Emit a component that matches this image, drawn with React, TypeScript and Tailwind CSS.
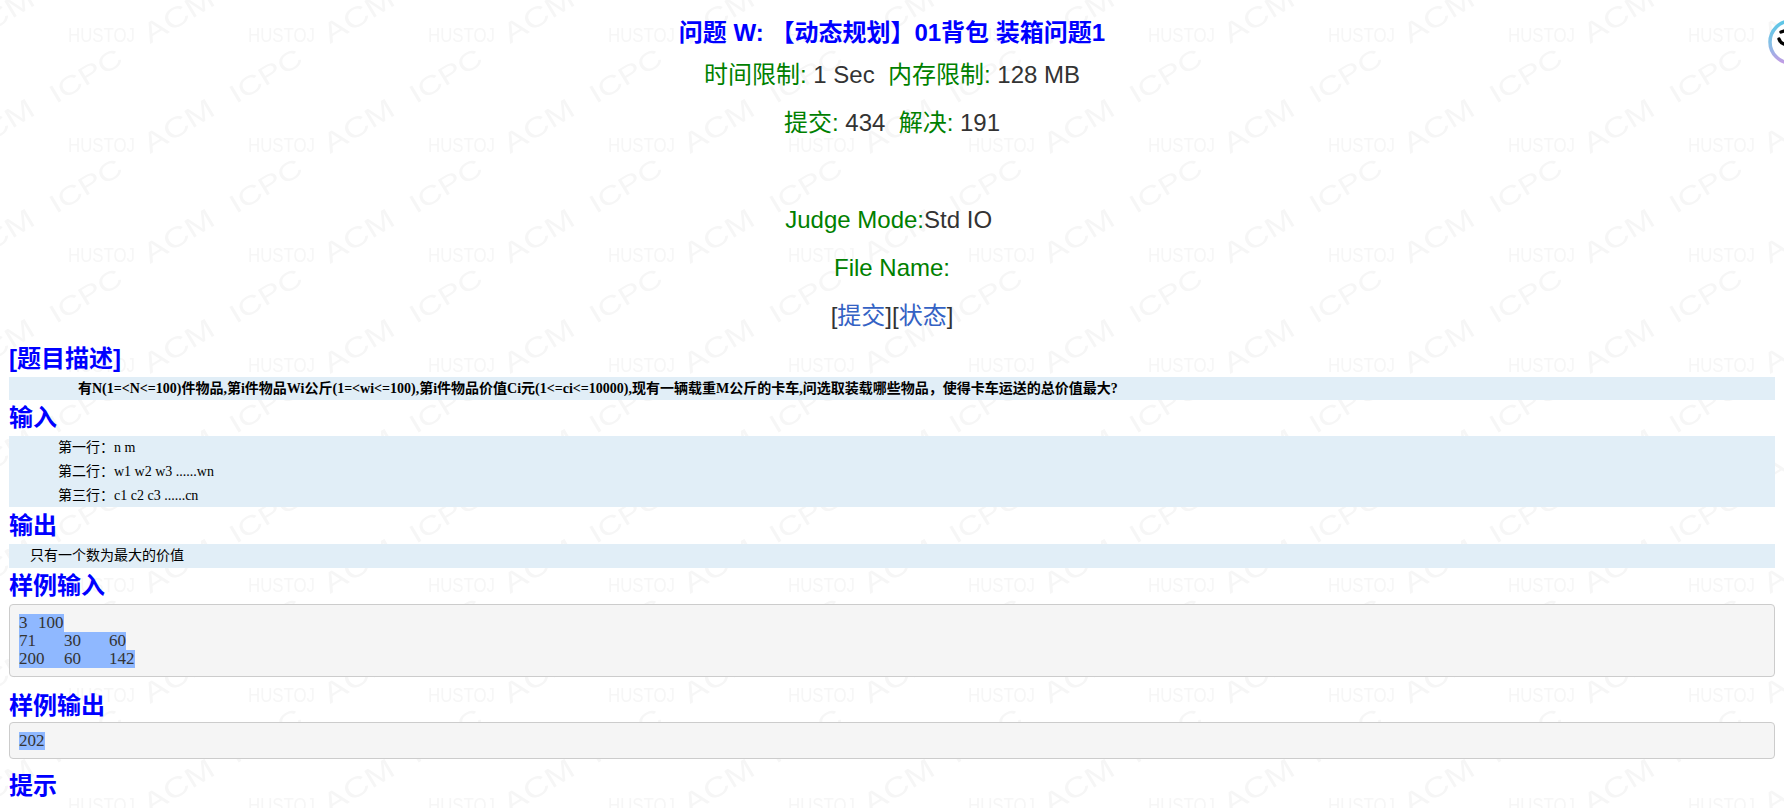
import React from 'react';

const BODY_FONT = 'font-["Liberation_Sans","Noto_Sans_CJK_SC",sans-serif]';

// repeating HUSTOJ / ACM / ICPC background, tile is 180x110
const Watermark: React.FC = () => {
  const acmOffsets = [
    [0, 0],
    [0, 110],
    [-180, 0],
    [-180, 110],
  ];
  return (
    <svg className="absolute inset-0 -z-10 h-full w-full" aria-hidden="true">
      <defs>
        <pattern id="hustoj-mark" x="0" y="0" width="180" height="110" patternUnits="userSpaceOnUse">
          <g fill="#f6f6f6" fontFamily="'Liberation Sans', sans-serif">
            <text x="68" y="42" fontSize="20" textLength="67" lengthAdjust="spacingAndGlyphs">
              HUSTOJ
            </text>
            {acmOffsets.map(([dx, dy]) => (
              <text
                key={`${dx}-${dy}`}
                transform={`translate(${150 + dx} ${44 + dy}) rotate(-31)`}
                fontSize="28"
                textLength="78"
                lengthAdjust="spacingAndGlyphs"
              >
                ACM
              </text>
            ))}
            <text
              transform="translate(56 104) rotate(-31)"
              fontSize="26"
              textLength="80"
              lengthAdjust="spacingAndGlyphs"
            >
              ICPC
            </text>
          </g>
        </pattern>
      </defs>
      <rect width="100%" height="100%" fill="url(#hustoj-mark)" />
    </svg>
  );
};

// round assistant badge, cut off by the right edge of the window
const CornerBadge: React.FC = () => (
  <svg className="absolute right-0 top-[19px]" width="16" height="46" viewBox="0 0 16 46" aria-hidden="true">
    <defs>
      <linearGradient id="badge-ring" x1="0" y1="0" x2="0" y2="1">
        <stop offset="0" stopColor="#5cc6e6" />
        <stop offset="0.55" stopColor="#86bfe6" />
        <stop offset="1" stopColor="#c29be4" />
      </linearGradient>
    </defs>
    <circle cx="23" cy="23" r="21" fill="#fff" stroke="url(#badge-ring)" strokeWidth="3.5" />
    <path d="M13 13 l3 -1 M11 20 c1 3 3 4.500 5 5" fill="none" stroke="#000" strokeWidth="3.4" strokeLinecap="round" />
  </svg>
);

const Heading: React.FC<{ children: React.ReactNode; className?: string }> = ({ children, className = '' }) => (
  <h2 className={`flex items-center text-[24px] font-bold leading-none text-[#0000ff] ${className}`}>{children}</h2>
);

const Label: React.FC<{ children: React.ReactNode }> = ({ children }) => (
  <span className="text-[#008000]">{children}</span>
);

const Picked: React.FC<{ children: React.ReactNode }> = ({ children }) => (
  <span className="inline-block h-[18px] bg-[#8fb8ff] align-top leading-[18px]">{children}</span>
);

const App: React.FC = () => {
  return (
    <div className={`relative isolate h-[808px] overflow-hidden px-[9px] text-[#333333] ${BODY_FONT}`}>
      <Watermark />
      <CornerBadge />

      <div className="text-center text-[24px] leading-[48px]">
        <h1 className="pt-[14px] text-[24px] font-bold leading-[37px] text-[#0000ff]">
          问题 W: 【动态规划】01背包 装箱问题1
        </h1>
        <p>
          <Label>时间限制:</Label> 1 Sec&nbsp;&nbsp;<Label>内存限制:</Label> 128 MB
        </p>
        <p>
          <Label>提交:</Label> 434&nbsp;&nbsp;<Label>解决:</Label> 191
        </p>
        <div className="h-[49px]" />
        <p>
          <Label>Judge Mode:</Label>Std IO&nbsp;
        </p>
        <p>
          <Label>File Name:</Label>
        </p>
        <p>
          [<span className="text-[#3462c4]">提交</span>][<span className="text-[#3462c4]">状态</span>]
        </p>
      </div>

      <Heading className="h-[37px]">[题目描述]</Heading>
      <div className='h-[23px] bg-[#e1eef7] pl-[69px] font-["Liberation_Serif","Noto_Sans_CJK_SC",serif] text-[14px] font-bold leading-[23px] text-black'>
        有N(1=&lt;N&lt;=100)件物品,第i件物品Wi公斤(1=&lt;wi&lt;=100),第i件物品价值Ci元(1&lt;=ci&lt;=10000),现有一辆载重M公斤的卡车,问选取装载哪些物品，使得卡车运送的总价值最大?
      </div>

      <Heading className="h-[36px]">输入</Heading>
      <div className='h-[71px] bg-[#e1eef7] pl-[49px] font-["Liberation_Serif","Noto_Sans_CJK_SC",serif] text-[14px] leading-[24px] text-black'>
        <p>第一行：n m</p>
        <p>第二行：w1 w2 w3 ......wn</p>
        <p>第三行：c1 c2 c3 ......cn</p>
      </div>

      <Heading className="h-[37px]">输出</Heading>
      <div className='h-[24px] bg-[#e1eef7] pl-[21px] font-["Liberation_Serif","Noto_Sans_CJK_SC",serif] text-[14px] leading-[24px] text-black'>
        只有一个数为最大的价值
      </div>

      <Heading className="h-[36px]">样例输入</Heading>
      <pre className='h-[73px] rounded border border-[#cccccc] bg-[#f5f5f5] px-[9px] py-[9px] font-["Liberation_Serif",serif] text-[17px] leading-[18px] text-[#333333] [tab-size:45px] [word-spacing:1px]'>
        <Picked>3  100</Picked>
        {'\n'}
        <Picked>{'71\t30\t60'}</Picked>
        {'\n'}
        <Picked>{'200\t60\t142'}</Picked>
      </pre>

      <Heading className="h-[45px] pt-[13px]">样例输出</Heading>
      <pre className='h-[37px] rounded border border-[#cccccc] bg-[#f5f5f5] px-[9px] py-[9px] font-["Liberation_Serif",serif] text-[17px] leading-[18px] text-[#333333]'>
        <Picked>202</Picked>
      </pre>

      <Heading className="h-[54px]">提示</Heading>
    </div>
  );
};

export default App;
